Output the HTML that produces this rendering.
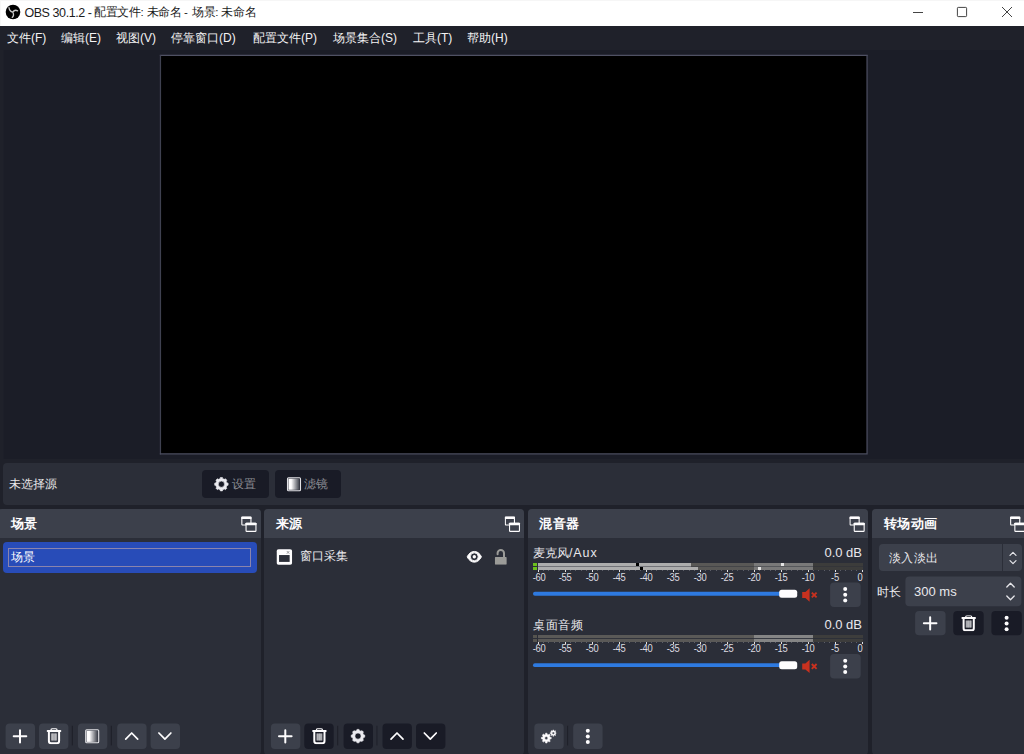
<!DOCTYPE html>
<html lang="zh">
<head>
<meta charset="utf-8">
<title>OBS 30.1.2</title>
<style>
*{box-sizing:border-box;margin:0;padding:0}
html,body{width:1024px;height:754px;overflow:hidden;background:#1f212a}
body{font-family:"Liberation Sans",sans-serif;font-size:12px;color:#fefdfe;position:relative}
.abs{position:absolute}
svg{position:absolute;overflow:visible}
#titlebar{left:0;top:0;width:1024px;height:26px;background:#fff;color:#000}
#titletext{left:24.4px;top:5.2px;height:15px;line-height:15px;font-size:11.5px;white-space:nowrap;color:#1c1c1c}
#titletext .cj{letter-spacing:-0.45px}
#menubar{left:0;top:26px;width:1024px;height:24px;background:#1f212a}
.mi{position:absolute;top:0;height:24px;line-height:24px;font-size:12px;white-space:nowrap;color:#f4f3f4}
#central{left:4px;top:50px;width:1020px;height:409px;background:#1b1d27}
#central2{left:3px;top:50px;width:1px;height:409px;background:#1d1f29}
#preview{left:160px;top:55px;width:708px;height:399px;background:#000;border:1px solid #4d4f5f}
#ctx{left:3px;top:463px;width:1030px;height:42px;background:#2b2e38;border-radius:4px}
.cbtn{position:absolute;top:470px;height:28px;background:#191b26;border-radius:4px;color:#8b8c92;font-size:12px;line-height:28px;white-space:nowrap}
.dock{position:absolute;top:509px;height:246px;background:#2b2e38;border-radius:4px}
.dtitle{position:absolute;left:0;top:0;right:0;height:29px;background:#3c404b;border-radius:4px 4px 0 0;font-weight:bold;font-size:13px;line-height:29px;white-space:nowrap}
.dtitle span{position:absolute;top:0}
.tb{position:absolute;top:723px;width:29px;height:26px;border-radius:4px;background:#3c404b}
.tb.d{background:#191b26}
.sep{position:absolute;top:727px;width:1px;height:18px;background:#1f212a}
.t{position:absolute;white-space:nowrap}
.ml{width:24px;text-align:center;font-size:10px;line-height:10px;color:#dcdce0;letter-spacing:-0.3px;transform:scaleX(0.94)}
.tx{color:#e9e8ec}
</style>
</head>
<body>
<!-- TITLE BAR -->
<div id="titlebar" class="abs">
<div class="abs" style="left:0;top:0;width:1024px;height:1px;background:#f6f6f6"></div><div class="abs" style="left:0;top:0;width:1px;height:26px;background:#f8f8f8"></div>
<div id="titletext" class="abs"><span class="t" style="left:0;top:0.6px;font-size:12.5px;letter-spacing:-0.42px">OBS 30.1.2 - </span><span class="t cj" style="left:70px">配置文件: </span><span class="t cj" style="left:122.2px">未命名 - </span><span class="t cj" style="left:167.8px">场景: </span><span class="t cj" style="left:197.1px">未命名</span></div>
</div>
<svg width="16" height="16" style="left:5.1px;top:4px" viewBox="0 0 16 16"><circle cx="8" cy="8" r="7.3" fill="#000"/><path d="M4 3.6C4.2 6 5.6 7.6 7.8 8.2M12.6 6.8C10.6 5.8 8.8 6.6 7.8 8.2M7.2 13.4C8.8 12 8.8 10 7.8 8.2" stroke="#c9c9c9" stroke-width="1.3" fill="none" stroke-linecap="round"/></svg>
<div class="abs" style="left:913px;top:12px;width:10px;height:1px;background:#444"></div>
<svg width="12" height="12" style="left:956px;top:6.4px" viewBox="0 0 12 12"><rect x="1.4" y="1.4" width="9.2" height="9.2" rx="0.8" fill="none" stroke="#444" stroke-width="1"/></svg>
<svg width="10" height="10" style="left:1002.2px;top:7.3px" viewBox="0 0 10 10"><path d="M0 0L10 10M10 0L0 10" stroke="#444" stroke-width="1"/></svg>
<!-- MENU BAR -->
<div id="menubar" class="abs">
<span class="mi" style="left:7px">文件(F)</span>
<span class="mi" style="left:61px">编辑(E)</span>
<span class="mi" style="left:116px">视图(V)</span>
<span class="mi" style="left:171px">停靠窗口(D)</span>
<span class="mi" style="left:253px">配置文件(P)</span>
<span class="mi" style="left:333px">场景集合(S)</span>
<span class="mi" style="left:413px">工具(T)</span>
<span class="mi" style="left:467px">帮助(H)</span>
</div>
<!-- CENTRAL -->
<div id="central" class="abs"></div><div id="central2" class="abs"></div>
<svg width="1024" height="754" style="left:0;top:0"><rect x="160.45" y="55.35" width="706.6" height="398.6" fill="#000"/><path d="M159.8 55.35H867.7" stroke="#4f5163" stroke-width="1.25"/><path d="M160.45 55.35V454.6" stroke="#3f4150" stroke-width="1.25"/><path d="M867.05 55.35V454.6M159.8 453.95H867.7" stroke="#4b4d5f" stroke-width="1.25"/></svg>
<div id="ctx" class="abs"></div>
<div class="t" style="left:9px;top:476px;line-height:16px;color:#e9e8ea">未选择源</div>
<div class="cbtn" style="left:202px;width:67px"><span class="t" style="left:30px">设置</span></div>
<div class="cbtn" style="left:275px;width:66px"><span class="t" style="left:29px">滤镜</span></div>
<svg width="17" height="17" style="left:213px;top:476px"><use href="#i-gear" x="0.40" y="0.20" width="16" height="16"/></svg><svg width="17" height="17" style="left:286px;top:476px"><use href="#i-filter" x="0.00" y="0.20" width="16" height="16"/></svg>
<!-- DOCKS -->
<div class="dock" style="left:-2px;width:263px"><div class="dtitle"><span style="left:13px">场景</span></div></div>
<div class="dock" style="left:264px;width:260px"><div class="dtitle"><span style="left:12px">来源</span></div></div>
<div class="dock" style="left:528px;width:340px"><div class="dtitle"><span style="left:11px;letter-spacing:0.5px">混音器</span></div></div>
<div class="dock" style="left:872px;width:170px"><div class="dtitle"><span style="left:12px;letter-spacing:0.3px">转场动画</span></div></div>
<!-- SCENES -->
<div class="abs" style="left:3px;top:542px;width:254px;height:31px;background:#284cb8;border-radius:4px"></div>
<div class="abs" style="left:8px;top:548px;width:243px;height:19px;border:1px solid #8a84ad"></div>
<div class="t" style="left:11px;top:549px;line-height:17px">场景</div>
<svg width="1024" height="754" style="left:0;top:0"><rect x="5.6" y="723.5" width="29.4" height="25.6" rx="4" fill="#3c404b"/></svg><svg width="17" height="17" style="left:12px;top:728px"><use href="#i-plus" x="0.00" y="0.30" width="16" height="16"/></svg>
<svg width="1024" height="754" style="left:0;top:0"><rect x="39" y="723.5" width="29.4" height="25.6" rx="4" fill="#3c404b"/></svg><svg width="17" height="17" style="left:46px;top:728px"><use href="#i-trash" x="0.00" y="0.30" width="16" height="16"/></svg>
<svg width="2" height="20" style="left:0;top:0"><rect x="71.8" y="725.8" width="1.1" height="19.6" fill="#1f212a"/></svg>
<svg width="1024" height="754" style="left:0;top:0"><rect x="77.9" y="723.5" width="29.4" height="25.6" rx="4" fill="#3c404b"/></svg><svg width="17" height="17" style="left:84px;top:728px"><use href="#i-filter" x="0.20" y="0.30" width="16" height="16"/></svg>
<svg width="2" height="20" style="left:0;top:0"><rect x="110.8" y="725.8" width="1.1" height="19.6" fill="#1f212a"/></svg>
<svg width="1024" height="754" style="left:0;top:0"><rect x="117.2" y="723.5" width="29.4" height="25.6" rx="4" fill="#3c404b"/></svg><svg width="17" height="17" style="left:123px;top:728px"><use href="#i-up" x="0.70" y="0.10" width="16" height="16"/></svg>
<svg width="1024" height="754" style="left:0;top:0"><rect x="150.6" y="723.5" width="29.4" height="25.6" rx="4" fill="#3c404b"/></svg><svg width="17" height="17" style="left:156px;top:728px"><use href="#i-down" x="0.90" y="0.10" width="16" height="16"/></svg>
<svg width="17" height="17" style="left:241px;top:516px"><use href="#i-float" x="0.00" y="0.20" width="16" height="16"/></svg>
<!-- SOURCES -->
<div class="t tx" style="left:300px;top:548px;line-height:17px">窗口采集</div>
<svg width="16.7" height="17" style="left:276px;top:549px"><use href="#i-wincap" x="0.50" y="0.00" width="15.7" height="16"/></svg>
<svg width="17" height="13.4" style="left:466px;top:550px"><use href="#i-eye" x="0.30" y="0.60" width="16" height="12.4"/></svg>
<svg width="13" height="17" style="left:494px;top:548px"><use href="#i-lock" x="0.80" y="0.70" width="12" height="16"/></svg>
<svg width="1024" height="754" style="left:0;top:0"><rect x="270.9" y="723.5" width="29.4" height="25.6" rx="4" fill="#3c404b"/></svg><svg width="17" height="17" style="left:277px;top:728px"><use href="#i-plus" x="0.30" y="0.30" width="16" height="16"/></svg>
<svg width="1024" height="754" style="left:0;top:0"><rect x="304.3" y="723.5" width="29.4" height="25.6" rx="4" fill="#191b26"/></svg><svg width="17" height="17" style="left:311px;top:728px"><use href="#i-trash" x="0.40" y="0.30" width="16" height="16"/></svg>
<svg width="2" height="20" style="left:0;top:0"><rect x="337.1" y="725.8" width="1.1" height="19.6" fill="#1f212a"/></svg>
<svg width="1024" height="754" style="left:0;top:0"><rect x="343.6" y="723.5" width="29.4" height="25.6" rx="4" fill="#191b26"/></svg><svg width="17" height="17" style="left:350px;top:728px"><use href="#i-gear" x="0.00" y="0.10" width="16" height="16"/></svg>
<svg width="2" height="20" style="left:0;top:0"><rect x="376.4" y="725.8" width="1.1" height="19.6" fill="#1f212a"/></svg>
<svg width="1024" height="754" style="left:0;top:0"><rect x="382.5" y="723.5" width="29.4" height="25.6" rx="4" fill="#191b26"/></svg><svg width="17" height="17" style="left:389px;top:728px"><use href="#i-up" x="0.00" y="0.10" width="16" height="16"/></svg>
<svg width="1024" height="754" style="left:0;top:0"><rect x="416" y="723.5" width="29.4" height="25.6" rx="4" fill="#191b26"/></svg><svg width="17" height="17" style="left:422px;top:728px"><use href="#i-down" x="0.30" y="0.10" width="16" height="16"/></svg>
<svg width="17" height="17" style="left:504px;top:516px"><use href="#i-float" x="0.50" y="0.20" width="16" height="16"/></svg>
<!-- MIXER -->
<div class="t tx" style="left:533px;top:545px;line-height:16px">麦克风<span style="letter-spacing:0.9px;font-size:12.5px">/Aux</span></div>
<div class="t tx" style="left:790px;top:545px;width:72px;text-align:right;line-height:16px;font-size:13px">0.0 dB</div>
<div class="abs" style="left:538px;top:566px;width:216px;height:1px;background:#444548"></div>
<div class="abs" style="left:754px;top:566px;width:59.4px;height:1px;background:#55575b"></div>
<div class="abs" style="left:813.4px;top:566px;width:49.6px;height:1px;background:#343539"></div>
<div class="abs" style="left:538px;top:566px;width:153px;height:1px;background:#727378"></div>
<div class="abs" style="left:538px;top:563px;width:216px;height:3px;background:#595856"></div>
<div class="abs" style="left:754px;top:563px;width:59.4px;height:3px;background:#797979"></div>
<div class="abs" style="left:813.4px;top:563px;width:49.6px;height:3px;background:#3c3c3b"></div>
<div class="abs" style="left:538px;top:563px;width:153px;height:3px;background:#adadad"></div>
<div class="abs" style="left:636px;top:563px;width:3px;height:3px;background:#000"></div>
<div class="abs" style="left:780.7px;top:563px;width:3px;height:3px;background:#e4e4e4"></div>
<div class="abs" style="left:533px;top:563px;width:3.5px;height:3px;background:#6cc01c"></div>
<div class="abs" style="left:538px;top:567px;width:216px;height:3px;background:#595856"></div>
<div class="abs" style="left:754px;top:567px;width:59.4px;height:3px;background:#797979"></div>
<div class="abs" style="left:813.4px;top:567px;width:49.6px;height:3px;background:#3c3c3b"></div>
<div class="abs" style="left:538px;top:567px;width:159.5px;height:3px;background:#adadad"></div>
<div class="abs" style="left:639.5px;top:567px;width:3px;height:3px;background:#000"></div>
<div class="abs" style="left:757.5px;top:567px;width:3px;height:3px;background:#e4e4e4"></div>
<div class="abs" style="left:533px;top:567px;width:3.5px;height:3px;background:#6cc01c"></div>
<div class="abs" style="left:537.5px;top:570px;width:1px;height:2px;background:#dedee2"></div>
<div class="abs" style="left:542.9px;top:570px;width:1px;height:1px;background:#5c5e68"></div>
<div class="abs" style="left:548.3px;top:570px;width:1px;height:1px;background:#5c5e68"></div>
<div class="abs" style="left:553.7px;top:570px;width:1px;height:1px;background:#5c5e68"></div>
<div class="abs" style="left:559.1px;top:570px;width:1px;height:1px;background:#5c5e68"></div>
<div class="abs" style="left:564.5px;top:570px;width:1px;height:2px;background:#dedee2"></div>
<div class="abs" style="left:569.9px;top:570px;width:1px;height:1px;background:#5c5e68"></div>
<div class="abs" style="left:575.3px;top:570px;width:1px;height:1px;background:#5c5e68"></div>
<div class="abs" style="left:580.7px;top:570px;width:1px;height:1px;background:#5c5e68"></div>
<div class="abs" style="left:586.1px;top:570px;width:1px;height:1px;background:#5c5e68"></div>
<div class="abs" style="left:591.5px;top:570px;width:1px;height:2px;background:#dedee2"></div>
<div class="abs" style="left:596.9px;top:570px;width:1px;height:1px;background:#5c5e68"></div>
<div class="abs" style="left:602.3px;top:570px;width:1px;height:1px;background:#5c5e68"></div>
<div class="abs" style="left:607.7px;top:570px;width:1px;height:1px;background:#5c5e68"></div>
<div class="abs" style="left:613.1px;top:570px;width:1px;height:1px;background:#5c5e68"></div>
<div class="abs" style="left:618.5px;top:570px;width:1px;height:2px;background:#dedee2"></div>
<div class="abs" style="left:623.9px;top:570px;width:1px;height:1px;background:#5c5e68"></div>
<div class="abs" style="left:629.3px;top:570px;width:1px;height:1px;background:#5c5e68"></div>
<div class="abs" style="left:634.7px;top:570px;width:1px;height:1px;background:#5c5e68"></div>
<div class="abs" style="left:640.1px;top:570px;width:1px;height:1px;background:#5c5e68"></div>
<div class="abs" style="left:645.5px;top:570px;width:1px;height:2px;background:#dedee2"></div>
<div class="abs" style="left:650.9px;top:570px;width:1px;height:1px;background:#5c5e68"></div>
<div class="abs" style="left:656.3px;top:570px;width:1px;height:1px;background:#5c5e68"></div>
<div class="abs" style="left:661.7px;top:570px;width:1px;height:1px;background:#5c5e68"></div>
<div class="abs" style="left:667.1px;top:570px;width:1px;height:1px;background:#5c5e68"></div>
<div class="abs" style="left:672.5px;top:570px;width:1px;height:2px;background:#dedee2"></div>
<div class="abs" style="left:677.9px;top:570px;width:1px;height:1px;background:#5c5e68"></div>
<div class="abs" style="left:683.3px;top:570px;width:1px;height:1px;background:#5c5e68"></div>
<div class="abs" style="left:688.7px;top:570px;width:1px;height:1px;background:#5c5e68"></div>
<div class="abs" style="left:694.1px;top:570px;width:1px;height:1px;background:#5c5e68"></div>
<div class="abs" style="left:699.5px;top:570px;width:1px;height:2px;background:#dedee2"></div>
<div class="abs" style="left:704.9px;top:570px;width:1px;height:1px;background:#5c5e68"></div>
<div class="abs" style="left:710.3px;top:570px;width:1px;height:1px;background:#5c5e68"></div>
<div class="abs" style="left:715.7px;top:570px;width:1px;height:1px;background:#5c5e68"></div>
<div class="abs" style="left:721.1px;top:570px;width:1px;height:1px;background:#5c5e68"></div>
<div class="abs" style="left:726.5px;top:570px;width:1px;height:2px;background:#dedee2"></div>
<div class="abs" style="left:731.9px;top:570px;width:1px;height:1px;background:#5c5e68"></div>
<div class="abs" style="left:737.3px;top:570px;width:1px;height:1px;background:#5c5e68"></div>
<div class="abs" style="left:742.7px;top:570px;width:1px;height:1px;background:#5c5e68"></div>
<div class="abs" style="left:748.1px;top:570px;width:1px;height:1px;background:#5c5e68"></div>
<div class="abs" style="left:753.5px;top:570px;width:1px;height:2px;background:#dedee2"></div>
<div class="abs" style="left:758.9px;top:570px;width:1px;height:1px;background:#5c5e68"></div>
<div class="abs" style="left:764.3px;top:570px;width:1px;height:1px;background:#5c5e68"></div>
<div class="abs" style="left:769.7px;top:570px;width:1px;height:1px;background:#5c5e68"></div>
<div class="abs" style="left:775.1px;top:570px;width:1px;height:1px;background:#5c5e68"></div>
<div class="abs" style="left:780.5px;top:570px;width:1px;height:2px;background:#dedee2"></div>
<div class="abs" style="left:785.9px;top:570px;width:1px;height:1px;background:#5c5e68"></div>
<div class="abs" style="left:791.3px;top:570px;width:1px;height:1px;background:#5c5e68"></div>
<div class="abs" style="left:796.7px;top:570px;width:1px;height:1px;background:#5c5e68"></div>
<div class="abs" style="left:802.1px;top:570px;width:1px;height:1px;background:#5c5e68"></div>
<div class="abs" style="left:807.5px;top:570px;width:1px;height:2px;background:#dedee2"></div>
<div class="abs" style="left:812.9px;top:570px;width:1px;height:1px;background:#5c5e68"></div>
<div class="abs" style="left:818.3px;top:570px;width:1px;height:1px;background:#5c5e68"></div>
<div class="abs" style="left:823.7px;top:570px;width:1px;height:1px;background:#5c5e68"></div>
<div class="abs" style="left:829.1px;top:570px;width:1px;height:1px;background:#5c5e68"></div>
<div class="abs" style="left:834.5px;top:570px;width:1px;height:2px;background:#dedee2"></div>
<div class="abs" style="left:839.9px;top:570px;width:1px;height:1px;background:#5c5e68"></div>
<div class="abs" style="left:845.3px;top:570px;width:1px;height:1px;background:#5c5e68"></div>
<div class="abs" style="left:850.7px;top:570px;width:1px;height:1px;background:#5c5e68"></div>
<div class="abs" style="left:856.1px;top:570px;width:1px;height:1px;background:#5c5e68"></div>
<div class="abs" style="left:861.5px;top:570px;width:1px;height:2px;background:#dedee2"></div>
<div class="t ml" style="left:526.9px;top:572.5px">-60</div>
<div class="t ml" style="left:552.9px;top:572.5px">-55</div>
<div class="t ml" style="left:579.9px;top:572.5px">-50</div>
<div class="t ml" style="left:606.9px;top:572.5px">-45</div>
<div class="t ml" style="left:633.9px;top:572.5px">-40</div>
<div class="t ml" style="left:660.9px;top:572.5px">-35</div>
<div class="t ml" style="left:687.9px;top:572.5px">-30</div>
<div class="t ml" style="left:714.9px;top:572.5px">-25</div>
<div class="t ml" style="left:741.9px;top:572.5px">-20</div>
<div class="t ml" style="left:768.9px;top:572.5px">-15</div>
<div class="t ml" style="left:795.9px;top:572.5px">-10</div>
<div class="t ml" style="left:822.9px;top:572.5px">-5</div>
<div class="t ml" style="left:847.8px;top:572.5px">0</div>
<div class="t tx" style="left:533.4px;top:617px;line-height:16px;letter-spacing:0.45px">桌面音频</div>
<div class="t tx" style="left:790px;top:617px;width:72px;text-align:right;line-height:16px;font-size:13px">0.0 dB</div>
<div class="abs" style="left:538px;top:638px;width:216px;height:1px;background:#32343c"></div>
<div class="abs" style="left:754px;top:638px;width:59.4px;height:1px;background:#383b43"></div>
<div class="abs" style="left:813.4px;top:638px;width:49.6px;height:1px;background:#2d3038"></div>
<div class="abs" style="left:538px;top:635px;width:216px;height:3px;background:#5a5957"></div>
<div class="abs" style="left:754px;top:635px;width:59.4px;height:3px;background:#858585"></div>
<div class="abs" style="left:813.4px;top:635px;width:49.6px;height:3px;background:#3d3d3c"></div>
<div class="abs" style="left:533px;top:635px;width:3.5px;height:3px;background:#55544f"></div>
<div class="abs" style="left:538px;top:639px;width:216px;height:2.5px;background:#5a5957"></div>
<div class="abs" style="left:754px;top:639px;width:59.4px;height:2.5px;background:#858585"></div>
<div class="abs" style="left:813.4px;top:639px;width:49.6px;height:2.5px;background:#3d3d3c"></div>
<div class="abs" style="left:533px;top:639px;width:3.5px;height:2.5px;background:#55544f"></div>
<div class="abs" style="left:537.5px;top:641.5px;width:1px;height:2px;background:#dedee2"></div>
<div class="abs" style="left:542.9px;top:641.5px;width:1px;height:1px;background:#5c5e68"></div>
<div class="abs" style="left:548.3px;top:641.5px;width:1px;height:1px;background:#5c5e68"></div>
<div class="abs" style="left:553.7px;top:641.5px;width:1px;height:1px;background:#5c5e68"></div>
<div class="abs" style="left:559.1px;top:641.5px;width:1px;height:1px;background:#5c5e68"></div>
<div class="abs" style="left:564.5px;top:641.5px;width:1px;height:2px;background:#dedee2"></div>
<div class="abs" style="left:569.9px;top:641.5px;width:1px;height:1px;background:#5c5e68"></div>
<div class="abs" style="left:575.3px;top:641.5px;width:1px;height:1px;background:#5c5e68"></div>
<div class="abs" style="left:580.7px;top:641.5px;width:1px;height:1px;background:#5c5e68"></div>
<div class="abs" style="left:586.1px;top:641.5px;width:1px;height:1px;background:#5c5e68"></div>
<div class="abs" style="left:591.5px;top:641.5px;width:1px;height:2px;background:#dedee2"></div>
<div class="abs" style="left:596.9px;top:641.5px;width:1px;height:1px;background:#5c5e68"></div>
<div class="abs" style="left:602.3px;top:641.5px;width:1px;height:1px;background:#5c5e68"></div>
<div class="abs" style="left:607.7px;top:641.5px;width:1px;height:1px;background:#5c5e68"></div>
<div class="abs" style="left:613.1px;top:641.5px;width:1px;height:1px;background:#5c5e68"></div>
<div class="abs" style="left:618.5px;top:641.5px;width:1px;height:2px;background:#dedee2"></div>
<div class="abs" style="left:623.9px;top:641.5px;width:1px;height:1px;background:#5c5e68"></div>
<div class="abs" style="left:629.3px;top:641.5px;width:1px;height:1px;background:#5c5e68"></div>
<div class="abs" style="left:634.7px;top:641.5px;width:1px;height:1px;background:#5c5e68"></div>
<div class="abs" style="left:640.1px;top:641.5px;width:1px;height:1px;background:#5c5e68"></div>
<div class="abs" style="left:645.5px;top:641.5px;width:1px;height:2px;background:#dedee2"></div>
<div class="abs" style="left:650.9px;top:641.5px;width:1px;height:1px;background:#5c5e68"></div>
<div class="abs" style="left:656.3px;top:641.5px;width:1px;height:1px;background:#5c5e68"></div>
<div class="abs" style="left:661.7px;top:641.5px;width:1px;height:1px;background:#5c5e68"></div>
<div class="abs" style="left:667.1px;top:641.5px;width:1px;height:1px;background:#5c5e68"></div>
<div class="abs" style="left:672.5px;top:641.5px;width:1px;height:2px;background:#dedee2"></div>
<div class="abs" style="left:677.9px;top:641.5px;width:1px;height:1px;background:#5c5e68"></div>
<div class="abs" style="left:683.3px;top:641.5px;width:1px;height:1px;background:#5c5e68"></div>
<div class="abs" style="left:688.7px;top:641.5px;width:1px;height:1px;background:#5c5e68"></div>
<div class="abs" style="left:694.1px;top:641.5px;width:1px;height:1px;background:#5c5e68"></div>
<div class="abs" style="left:699.5px;top:641.5px;width:1px;height:2px;background:#dedee2"></div>
<div class="abs" style="left:704.9px;top:641.5px;width:1px;height:1px;background:#5c5e68"></div>
<div class="abs" style="left:710.3px;top:641.5px;width:1px;height:1px;background:#5c5e68"></div>
<div class="abs" style="left:715.7px;top:641.5px;width:1px;height:1px;background:#5c5e68"></div>
<div class="abs" style="left:721.1px;top:641.5px;width:1px;height:1px;background:#5c5e68"></div>
<div class="abs" style="left:726.5px;top:641.5px;width:1px;height:2px;background:#dedee2"></div>
<div class="abs" style="left:731.9px;top:641.5px;width:1px;height:1px;background:#5c5e68"></div>
<div class="abs" style="left:737.3px;top:641.5px;width:1px;height:1px;background:#5c5e68"></div>
<div class="abs" style="left:742.7px;top:641.5px;width:1px;height:1px;background:#5c5e68"></div>
<div class="abs" style="left:748.1px;top:641.5px;width:1px;height:1px;background:#5c5e68"></div>
<div class="abs" style="left:753.5px;top:641.5px;width:1px;height:2px;background:#dedee2"></div>
<div class="abs" style="left:758.9px;top:641.5px;width:1px;height:1px;background:#5c5e68"></div>
<div class="abs" style="left:764.3px;top:641.5px;width:1px;height:1px;background:#5c5e68"></div>
<div class="abs" style="left:769.7px;top:641.5px;width:1px;height:1px;background:#5c5e68"></div>
<div class="abs" style="left:775.1px;top:641.5px;width:1px;height:1px;background:#5c5e68"></div>
<div class="abs" style="left:780.5px;top:641.5px;width:1px;height:2px;background:#dedee2"></div>
<div class="abs" style="left:785.9px;top:641.5px;width:1px;height:1px;background:#5c5e68"></div>
<div class="abs" style="left:791.3px;top:641.5px;width:1px;height:1px;background:#5c5e68"></div>
<div class="abs" style="left:796.7px;top:641.5px;width:1px;height:1px;background:#5c5e68"></div>
<div class="abs" style="left:802.1px;top:641.5px;width:1px;height:1px;background:#5c5e68"></div>
<div class="abs" style="left:807.5px;top:641.5px;width:1px;height:2px;background:#dedee2"></div>
<div class="abs" style="left:812.9px;top:641.5px;width:1px;height:1px;background:#5c5e68"></div>
<div class="abs" style="left:818.3px;top:641.5px;width:1px;height:1px;background:#5c5e68"></div>
<div class="abs" style="left:823.7px;top:641.5px;width:1px;height:1px;background:#5c5e68"></div>
<div class="abs" style="left:829.1px;top:641.5px;width:1px;height:1px;background:#5c5e68"></div>
<div class="abs" style="left:834.5px;top:641.5px;width:1px;height:2px;background:#dedee2"></div>
<div class="abs" style="left:839.9px;top:641.5px;width:1px;height:1px;background:#5c5e68"></div>
<div class="abs" style="left:845.3px;top:641.5px;width:1px;height:1px;background:#5c5e68"></div>
<div class="abs" style="left:850.7px;top:641.5px;width:1px;height:1px;background:#5c5e68"></div>
<div class="abs" style="left:856.1px;top:641.5px;width:1px;height:1px;background:#5c5e68"></div>
<div class="abs" style="left:861.5px;top:641.5px;width:1px;height:2px;background:#dedee2"></div>
<div class="t ml" style="left:526.9px;top:643.75px">-60</div>
<div class="t ml" style="left:552.9px;top:643.75px">-55</div>
<div class="t ml" style="left:579.9px;top:643.75px">-50</div>
<div class="t ml" style="left:606.9px;top:643.75px">-45</div>
<div class="t ml" style="left:633.9px;top:643.75px">-40</div>
<div class="t ml" style="left:660.9px;top:643.75px">-35</div>
<div class="t ml" style="left:687.9px;top:643.75px">-30</div>
<div class="t ml" style="left:714.9px;top:643.75px">-25</div>
<div class="t ml" style="left:741.9px;top:643.75px">-20</div>
<div class="t ml" style="left:768.9px;top:643.75px">-15</div>
<div class="t ml" style="left:795.9px;top:643.75px">-10</div>
<div class="t ml" style="left:822.9px;top:643.75px">-5</div>
<div class="t ml" style="left:847.8px;top:643.75px">0</div>
<svg width="1024" height="754" style="left:0;top:0"><rect x="533" y="591.8" width="250" height="3.9" rx="1.95" fill="#2e7ae0"/><rect x="779.2" y="589.8" width="18" height="8" rx="2.5" fill="#fefdfe"/></svg>
<svg width="17" height="15" style="left:802px;top:588px"><use href="#i-mute" x="0.00" y="0.00" width="16" height="14"/></svg>
<svg width="1024" height="754" style="left:0;top:0"><rect x="830.1" y="582.4" width="30.6" height="24.6" rx="4" fill="#3c404b"/></svg><svg width="17" height="17" style="left:837px;top:586px"><use href="#i-dots" x="0.20" y="0.80" width="16" height="16"/></svg>
<svg width="1024" height="754" style="left:0;top:0"><rect x="533" y="663.2" width="250" height="3.9" rx="1.95" fill="#2e7ae0"/><rect x="779.2" y="661.2" width="18" height="8" rx="2.5" fill="#fefdfe"/></svg>
<svg width="17" height="15" style="left:802px;top:659px"><use href="#i-mute" x="0.00" y="0.40" width="16" height="14"/></svg>
<svg width="1024" height="754" style="left:0;top:0"><rect x="830.1" y="654" width="30.6" height="24.6" rx="4" fill="#3c404b"/></svg><svg width="17" height="17" style="left:837px;top:658px"><use href="#i-dots" x="0.20" y="0.40" width="16" height="16"/></svg>
<svg width="1024" height="754" style="left:0;top:0"><rect x="534.3" y="723.5" width="29.4" height="25.6" rx="4" fill="#3c404b"/></svg><svg width="17" height="17" style="left:540px;top:728px"><use href="#i-gears" x="0.30" y="0.10" width="16" height="16"/></svg>
<svg width="2" height="20" style="left:0;top:0"><rect x="567" y="725.8" width="1.1" height="19.6" fill="#1f212a"/></svg>
<svg width="1024" height="754" style="left:0;top:0"><rect x="573.2" y="723.5" width="29.4" height="25.6" rx="4" fill="#3c404b"/></svg><svg width="17" height="17" style="left:579px;top:728px"><use href="#i-dots" x="0.80" y="0.40" width="16" height="16"/></svg>
<svg width="17" height="17" style="left:849px;top:516px"><use href="#i-float" x="0.20" y="0.20" width="16" height="16"/></svg>
<!-- TRANSITIONS -->
<div class="abs" style="left:879px;top:544px;width:143px;height:27px;border-radius:4px;background:#3c404b"></div>
<div class="abs" style="left:1002px;top:544px;width:1px;height:27px;background:#2b2e38"></div>
<div class="t tx" style="left:889px;top:550px;line-height:17px;letter-spacing:0.3px">淡入淡出</div>
<svg width="8" height="14" style="left:1008.5px;top:551px"><use href="#i-updn"/></svg>
<div class="t tx" style="left:877px;top:583.7px;line-height:17px">时长</div>
<svg width="1024" height="754" style="left:0;top:0"><rect x="905.4" y="576.4" width="116" height="29.8" rx="4" fill="#3c404b"/></svg>
<div class="t tx" style="left:914px;top:583.6px;line-height:16px;font-size:13px">300 ms</div>
<svg width="9" height="6" style="left:1005.5px;top:581.5px" viewBox="0 0 9 6"><path d="M0.8 5L4.5 1.2L8.2 5" stroke="#e6e6ea" stroke-width="1.3" fill="none" stroke-linecap="round" stroke-linejoin="round"/></svg>
<svg width="9" height="6" style="left:1005.5px;top:595px" viewBox="0 0 9 6"><path d="M0.8 1L4.5 4.8L8.2 1" stroke="#e6e6ea" stroke-width="1.3" fill="none" stroke-linecap="round" stroke-linejoin="round"/></svg>
<svg width="1024" height="754" style="left:0;top:0"><rect x="915.1" y="611" width="30.5" height="24.3" rx="4" fill="#3c404b"/></svg><svg width="17" height="17" style="left:922px;top:615px"><use href="#i-plus" x="0.15" y="0.35" width="16" height="16"/></svg>
<svg width="1024" height="754" style="left:0;top:0"><rect x="953.3" y="611" width="30.4" height="24.3" rx="4" fill="#191b26"/></svg><svg width="17" height="17" style="left:960px;top:615px"><use href="#i-trash" x="0.70" y="0.35" width="16" height="16"/></svg>
<svg width="1024" height="754" style="left:0;top:0"><rect x="991.4" y="611" width="30.4" height="24.3" rx="4" fill="#191b26"/></svg><svg width="17" height="17" style="left:998px;top:615px"><use href="#i-dots" x="0.60" y="0.45" width="16" height="16"/></svg>
<svg width="17" height="17" style="left:1009px;top:516px"><use href="#i-float" x="0.80" y="0.20" width="16" height="16"/></svg>
<!-- ICON DEFS -->
<svg width="0" height="0" style="left:-10px;top:-10px">
<defs>
<symbol id="i-plus" viewBox="0 0 16 16"><path d="M8 1.9V14.1M1.7 8H14.3" stroke="#fefdfe" stroke-width="2" stroke-linecap="round" fill="none"/></symbol>
<symbol id="i-trash" viewBox="0 0 16 16"><rect x="5" y="5.2" width="6" height="7" fill="#9b9ca1"/><path d="M6.4 5.2V12.2M8 5.2V12.2M9.6 5.2V12.2" stroke="#c9c9cd" stroke-width="0.7"/><path d="M2.9 3.4V12.8a2.2 2.2 0 0 0 2.2 2.2H10.9a2.2 2.2 0 0 0 2.2 -2.2V3.4" stroke="#fefdfe" stroke-width="2" fill="none"/><path d="M1.7 2.7H14.3" stroke="#fefdfe" stroke-width="2" stroke-linecap="round"/><path d="M5 1.6Q5 0.4 6.2 0.4H9.8Q11 0.4 11 1.6" stroke="#fefdfe" stroke-width="1.2" fill="none"/></symbol>
<symbol id="i-up" viewBox="0 0 16 16"><path d="M2 11.1L8 4.9L14 11.1" stroke="#fefdfe" stroke-width="1.7" stroke-linecap="round" stroke-linejoin="round" fill="none"/></symbol>
<symbol id="i-down" viewBox="0 0 16 16"><path d="M2 4.9L8 11.1L14 4.9" stroke="#fefdfe" stroke-width="1.7" stroke-linecap="round" stroke-linejoin="round" fill="none"/></symbol>
<symbol id="i-dots" viewBox="0 0 16 16"><circle cx="8" cy="2.3" r="2" fill="#fefdfe"/><circle cx="8" cy="8" r="2" fill="#fefdfe"/><circle cx="8" cy="13.7" r="2" fill="#fefdfe"/></symbol>
<linearGradient id="g-filter" x1="0" y1="0" x2="1" y2="0"><stop offset="0" stop-color="#fefdfe"/><stop offset="0.25" stop-color="#fefdfe"/><stop offset="1" stop-color="#3a3d47"/></linearGradient>
<symbol id="i-filter" viewBox="0 0 16 16"><rect x="2.4" y="2.4" width="11.2" height="11.2" fill="url(#g-filter)"/><rect x="1.5" y="1.5" width="13" height="13" rx="1" fill="none" stroke="#e2e2e6" stroke-width="1.1"/></symbol>
<symbol id="i-float" viewBox="0 0 16 16"><rect x="0.85" y="0.85" width="9.1" height="8" rx="0.7" fill="none" stroke="#fefdfe" stroke-width="1.1"/><rect x="0.3" y="0.3" width="10.2" height="2.5" rx="0.6" fill="#fefdfe"/><rect x="5.05" y="7.05" width="9.9" height="8.1" rx="0.7" fill="#3c404b" stroke="#fefdfe" stroke-width="1.1"/><rect x="4.5" y="6.5" width="11" height="2.5" rx="0.6" fill="#fefdfe"/></symbol>
<symbol id="i-gear" viewBox="0 0 16 16"><path fill="#ebebf0" fill-rule="evenodd" stroke="#ebebf0" stroke-width="0.6" stroke-linejoin="round" d="M6.71 2.45 L6.94 1.28 L9.06 1.28 L9.29 2.45 L11.02 3.16 L12.00 2.50 L13.50 4.00 L12.84 4.98 L13.55 6.71 L14.72 6.94 L14.72 9.06 L13.55 9.29 L12.84 11.02 L13.50 12.00 L12.00 13.50 L11.02 12.84 L9.29 13.55 L9.06 14.72 L6.94 14.72 L6.71 13.55 L4.98 12.84 L4.00 13.50 L2.50 12.00 L3.16 11.02 L2.45 9.29 L1.28 9.06 L1.28 6.94 L2.45 6.71 L3.16 4.98 L2.50 4.00 L4.00 2.50 L4.98 3.16Z M4.90 8.00 a3.10 3.10 0 1 0 6.20 0 a3.10 3.10 0 1 0 -6.20 0Z"/></symbol>
<symbol id="i-gears" viewBox="0 0 16 16"><path fill="#fefdfe" fill-rule="evenodd" stroke="#fefdfe" stroke-width="0.5" stroke-linejoin="round" d="M5.11 6.30 L5.26 5.06 L6.74 5.06 L6.89 6.30 L7.99 6.76 L8.97 5.98 L10.02 7.03 L9.24 8.01 L9.70 9.11 L10.94 9.26 L10.94 10.74 L9.70 10.89 L9.24 11.99 L10.02 12.97 L8.97 14.02 L7.99 13.24 L6.89 13.70 L6.74 14.94 L5.26 14.94 L5.11 13.70 L4.01 13.24 L3.03 14.02 L1.98 12.97 L2.76 11.99 L2.30 10.89 L1.06 10.74 L1.06 9.26 L2.30 9.11 L2.76 8.01 L1.98 7.03 L3.03 5.98 L4.01 6.76Z M4.40 10.00 a1.60 1.60 0 1 0 3.20 0 a1.60 1.60 0 1 0 -3.20 0Z"/><path fill="#fefdfe" fill-rule="evenodd" stroke="#fefdfe" stroke-width="0.4" stroke-linejoin="round" d="M12.46 2.76 L12.57 1.83 L13.43 1.83 L13.54 2.76 L14.20 3.04 L14.94 2.46 L15.54 3.06 L14.96 3.80 L15.24 4.46 L16.17 4.57 L16.17 5.43 L15.24 5.54 L14.96 6.20 L15.54 6.94 L14.94 7.54 L14.20 6.96 L13.54 7.24 L13.43 8.17 L12.57 8.17 L12.46 7.24 L11.80 6.96 L11.06 7.54 L10.46 6.94 L11.04 6.20 L10.76 5.54 L9.83 5.43 L9.83 4.57 L10.76 4.46 L11.04 3.80 L10.46 3.06 L11.06 2.46 L11.80 3.04Z M11.80 5.00 a1.20 1.20 0 1 0 2.40 0 a1.20 1.20 0 1 0 -2.40 0Z"/></symbol>
<symbol id="i-wincap" viewBox="0 0 16 16"><rect x="0" y="0" width="16" height="16" rx="2.2" fill="#fefdfe"/><rect x="2.6" y="6" width="10.8" height="7" fill="#2b2e38"/><path d="M10.6 2L13 4.6M13 2L10.6 4.6" stroke="#8a8b90" stroke-width="0.9"/></symbol>
<symbol id="i-eye" viewBox="0 0 16 12.4"><path fill="#fefdfe" stroke="#fefdfe" stroke-width="0.9" stroke-linejoin="round" fill-rule="evenodd" d="M0.8 6.2C2.6 2.6 5.2 0.8 8 0.8S13.4 2.6 15.2 6.2C13.4 9.8 10.8 11.6 8 11.6S2.6 9.8 0.8 6.2ZM8 2.25a3.95 3.95 0 1 0 0 7.9a3.95 3.95 0 1 0 0-7.9Z"/><circle cx="8" cy="6.2" r="1.7" fill="#fefdfe"/></symbol>
<symbol id="i-lock" viewBox="0 0 12 16"><rect x="0" y="8.4" width="12" height="7.6" rx="0.8" fill="#9b9b98"/><path d="M2.8 5.6V4.4a3.2 3.2 0 0 1 6.4 0V8.6" stroke="#9b9b98" stroke-width="2" fill="none" stroke-linecap="round"/></symbol>
<symbol id="i-mute" viewBox="0 0 16 14"><path fill="#c8311f" d="M0.2 4H3.4L7.6 0.3V13.7L3.4 10H0.2Z"/><path d="M9.8 4.6L14.6 9.4M14.6 4.6L9.8 9.4" stroke="#c8311f" stroke-width="1.9"/></symbol>
<symbol id="i-updn" viewBox="0 0 8 14"><path d="M1 4.4L4 1.4L7 4.4M1 9.6L4 12.6L7 9.6" stroke="#e6e6ea" stroke-width="1.2" fill="none" stroke-linecap="round" stroke-linejoin="round"/></symbol>
</defs></svg>
</body>
</html>
